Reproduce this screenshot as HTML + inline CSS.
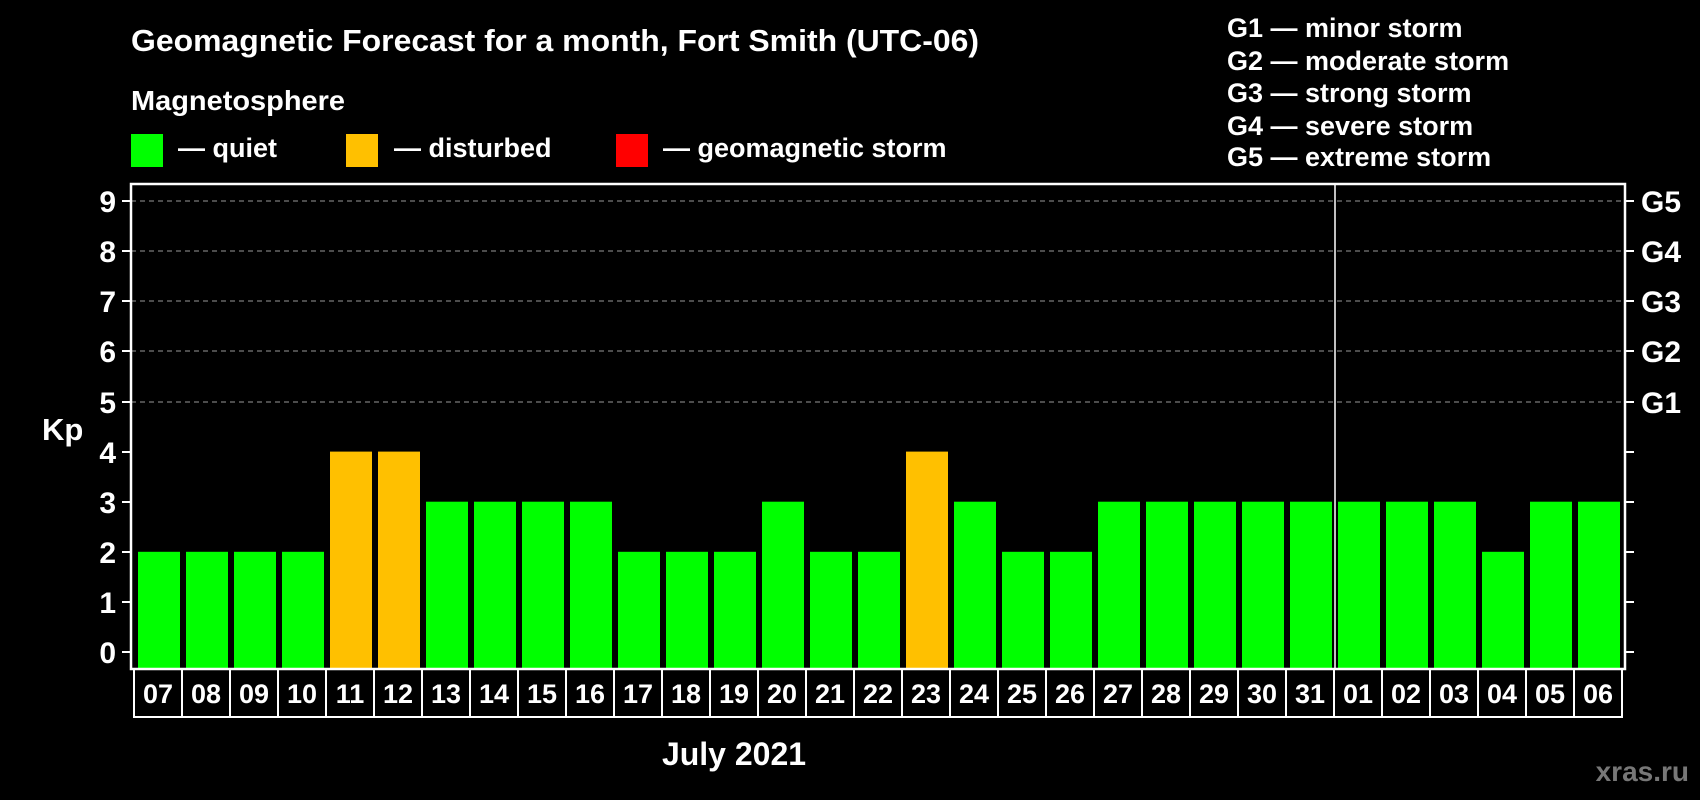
<!DOCTYPE html>
<html><head><meta charset="utf-8"><style>
html,body{margin:0;padding:0;background:#000;}
svg{display:block;}
text{font-family:"Liberation Sans",Arial,sans-serif;font-weight:bold;fill:#fff;}
</style></head><body>
<svg width="1700" height="800" viewBox="0 0 1700 800" xmlns="http://www.w3.org/2000/svg">
<rect width="1700" height="800" fill="#000"/>
<text x="131" y="51" font-size="31" textLength="848" lengthAdjust="spacingAndGlyphs">Geomagnetic Forecast for a month, Fort Smith (UTC-06)</text>
<text x="131" y="110" font-size="28" textLength="214" lengthAdjust="spacingAndGlyphs">Magnetosphere</text>
<rect x="131" y="134" width="32" height="33" fill="#00ff00"/>
<text x="178" y="157" font-size="27">— quiet</text>
<rect x="346" y="134" width="32" height="33" fill="#ffc000"/>
<text x="394" y="157" font-size="27">— disturbed</text>
<rect x="616" y="134" width="32" height="33" fill="#ff0000"/>
<text x="663" y="157" font-size="27">— geomagnetic storm</text>
<g font-size="27">
<text x="1227" y="37">G1 — minor storm</text>
<text x="1227" y="70">G2 — moderate storm</text>
<text x="1227" y="102">G3 — strong storm</text>
<text x="1227" y="135">G4 — severe storm</text>
<text x="1227" y="166">G5 — extreme storm</text>
</g>
<g stroke="#999" stroke-width="1" stroke-dasharray="5,4">
<line x1="131" y1="201" x2="1625" y2="201"/>
<line x1="131" y1="251" x2="1625" y2="251"/>
<line x1="131" y1="301" x2="1625" y2="301"/>
<line x1="131" y1="351" x2="1625" y2="351"/>
<line x1="131" y1="402" x2="1625" y2="402"/>
</g>
<g id="bars"></g>
<line x1="1335" y1="184" x2="1335" y2="669" stroke="#fff" stroke-width="1.5"/>
<rect x="131" y="184" width="1494" height="485" fill="none" stroke="#fff" stroke-width="2.5"/>
<g stroke="#fff" stroke-width="2">
<line x1="122" y1="201" x2="131" y2="201"/><line x1="122" y1="251" x2="131" y2="251"/><line x1="122" y1="301" x2="131" y2="301"/><line x1="122" y1="351" x2="131" y2="351"/><line x1="122" y1="402" x2="131" y2="402"/><line x1="122" y1="452" x2="131" y2="452"/><line x1="122" y1="502" x2="131" y2="502"/><line x1="122" y1="552" x2="131" y2="552"/><line x1="122" y1="602" x2="131" y2="602"/><line x1="122" y1="652" x2="131" y2="652"/>
<line x1="1625" y1="201" x2="1634" y2="201"/><line x1="1625" y1="251" x2="1634" y2="251"/><line x1="1625" y1="301" x2="1634" y2="301"/><line x1="1625" y1="351" x2="1634" y2="351"/><line x1="1625" y1="402" x2="1634" y2="402"/><line x1="1625" y1="452" x2="1634" y2="452"/><line x1="1625" y1="502" x2="1634" y2="502"/><line x1="1625" y1="552" x2="1634" y2="552"/><line x1="1625" y1="602" x2="1634" y2="602"/><line x1="1625" y1="652" x2="1634" y2="652"/>
</g>
<g font-size="30" text-anchor="end">
<text x="116" y="212">9</text><text x="116" y="262">8</text><text x="116" y="312">7</text><text x="116" y="362">6</text><text x="116" y="413">5</text><text x="116" y="463">4</text><text x="116" y="513">3</text><text x="116" y="563">2</text><text x="116" y="613">1</text><text x="116" y="663">0</text>
</g>
<g font-size="30">
<text x="1641" y="212">G5</text><text x="1641" y="262">G4</text><text x="1641" y="312">G3</text><text x="1641" y="362">G2</text><text x="1641" y="413">G1</text>
</g>
<text x="42" y="440" font-size="31">Kp</text>
<g id="dates"></g>
<text x="734" y="765" font-size="32" text-anchor="middle">July 2021</text>
<text x="1689" y="781" font-size="28" text-anchor="end" style="fill:#777">xras.ru</text>
<script>
(function(){
var v=[2,2,2,2,4,4,3,3,3,3,2,2,2,3,2,2,4,3,2,2,3,3,3,3,3,3,3,3,2,3,3];
var d=["07","08","09","10","11","12","13","14","15","16","17","18","19","20","21","22","23","24","25","26","27","28","29","30","31","01","02","03","04","05","06"];
var ns="http://www.w3.org/2000/svg",b=document.getElementById("bars"),g=document.getElementById("dates");
for(var i=0;i<31;i++){
 var x=138+i*48,r=document.createElementNS(ns,"rect");
 var ty=652-v[i]*50.1;
 r.setAttribute("x",x);r.setAttribute("y",ty);r.setAttribute("width",42);r.setAttribute("height",669-ty);
 r.setAttribute("fill",v[i]>=5?"#ff0000":(v[i]==4?"#ffc000":"#00ff00"));b.appendChild(r);
 var bx=134+i*48,br=document.createElementNS(ns,"rect");
 br.setAttribute("x",bx);br.setAttribute("y",669);br.setAttribute("width",48);br.setAttribute("height",48);
 br.setAttribute("fill","none");br.setAttribute("stroke","#fff");br.setAttribute("stroke-width","2");g.appendChild(br);
 var t=document.createElementNS(ns,"text");t.setAttribute("x",bx+24);t.setAttribute("y",703);
 t.setAttribute("font-size","27");t.setAttribute("text-anchor","middle");t.textContent=d[i];g.appendChild(t);
}
})();
</script>
</svg>
</body></html>
